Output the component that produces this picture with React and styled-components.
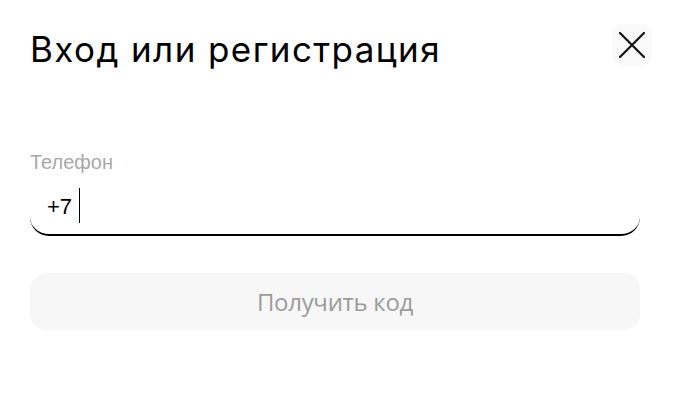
import React from "react";
import styled, { createGlobalStyle } from "styled-components";

const Global = createGlobalStyle`
  html, body { margin: 0; padding: 0; background: #ffffff; }
  body { font-family: "Liberation Sans", Arial, sans-serif; }
  * { box-sizing: border-box; }
`;

const Modal = styled.div`
  width: 673px;
  height: 413px;
  padding: 24px 21px 0 30px;
  background: #ffffff;
`;

const Header = styled.div`
  display: flex;
  justify-content: space-between;
  align-items: flex-start;
`;

const Title = styled.h1`
  margin: 5px 0 0;
  font-family: "Inter", "Liberation Sans", sans-serif;
  font-weight: 400;
  font-size: 35px;
  line-height: 40px;
  color: #000000;
  letter-spacing: 1.4px;
`;

const CloseButton = styled.button`
  width: 40px;
  height: 42px;
  border: none;
  border-radius: 10px;
  background: #fafafa;
  display: flex;
  align-items: center;
  justify-content: center;
  padding: 0;
  cursor: pointer;
`;

const Body = styled.div`
  padding-right: 12px;
`;

const FieldGroup = styled.div`
  margin-top: 81px;
  display: flex;
  flex-direction: column;
`;

const Label = styled.label`
  font-family: "Liberation Sans", Arial, sans-serif;
  font-size: 20px;
  line-height: 24px;
  color: #a8a8a8;
`;

const Field = styled.div`
  margin-top: 12px;
  height: 50px;
  display: flex;
  align-items: flex-start;
  padding: 0 17px;
  border-bottom: 2px solid #000000;
  border-radius: 0 0 19px 19px;
`;

const Value = styled.span`
  margin-top: 8px;
  font-family: "Liberation Sans", Arial, sans-serif;
  font-size: 22px;
  line-height: 26px;
  color: #000000;
`;

const Caret = styled.span`
  display: block;
  margin: 2px 0 0 7px;
  width: 1px;
  height: 35px;
  background: #000000;
`;

const SubmitButton = styled.button`
  margin-top: 37px;
  width: 100%;
  height: 57px;
  border: none;
  border-radius: 16px;
  background: #f7f7f7;
  font-family: "Open Sans", "Noto Sans", sans-serif;
  font-size: 24px;
  letter-spacing: -0.3px;
  color: #9c9c9c;
  display: flex;
  align-items: center;
  justify-content: center;
  padding: 0;
`;

function CloseIcon() {
  return (
    <svg width="28" height="28" viewBox="0 0 28 28" fill="none">
      <path d="M2 2 L26 26 M26 2 L2 26" stroke="#111" strokeWidth="2.2" strokeLinecap="round" />
    </svg>
  );
}

export default function App() {
  return (
    <>
      <Global />
      <Modal>
        <Header>
          <Title>Вход или регистрация</Title>
          <CloseButton aria-label="Закрыть">
            <CloseIcon />
          </CloseButton>
        </Header>
        <Body>
          <FieldGroup>
            <Label>Телефон</Label>
            <Field>
              <Value>+7</Value>
              <Caret />
            </Field>
          </FieldGroup>
          <SubmitButton disabled>Получить код</SubmitButton>
        </Body>
      </Modal>
    </>
  );
}
